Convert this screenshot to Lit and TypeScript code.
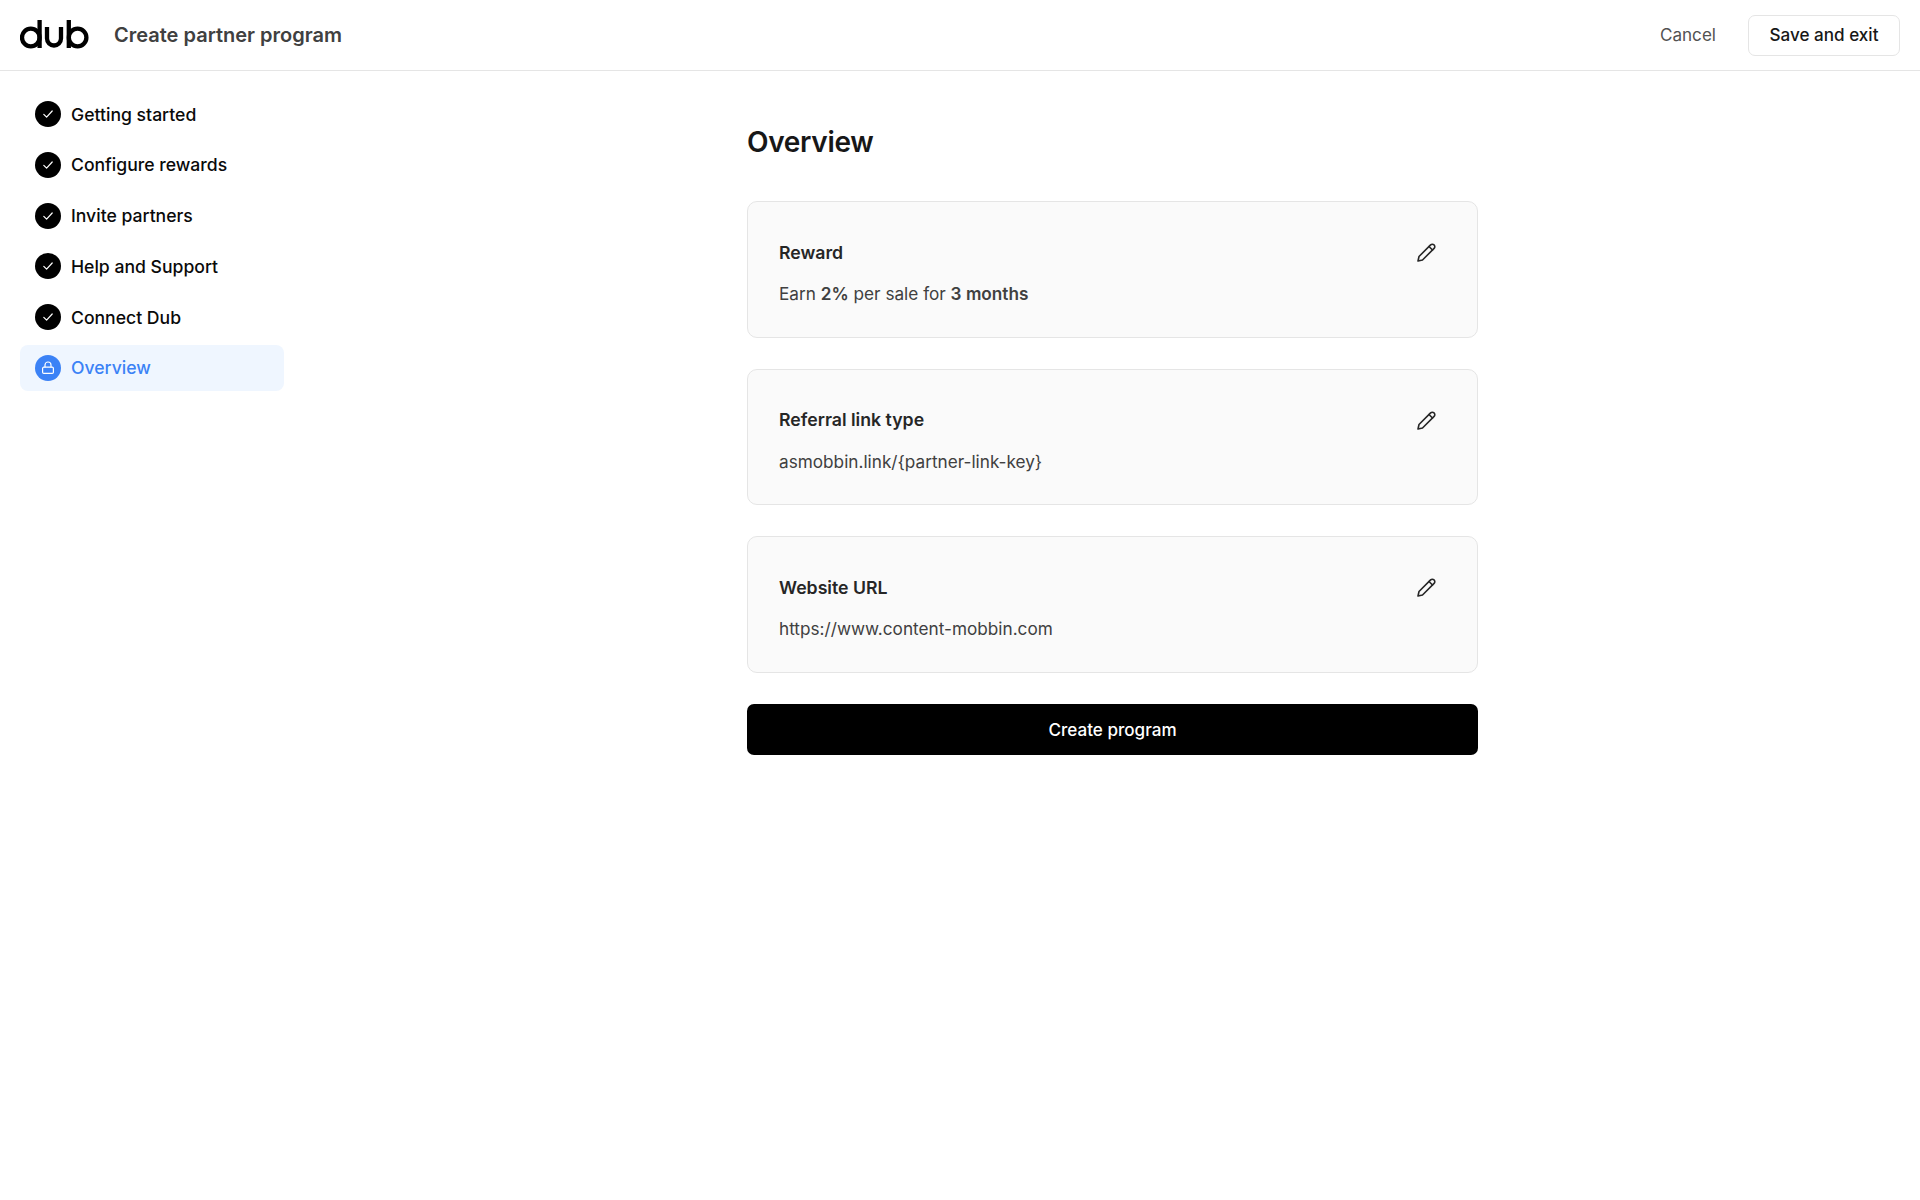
import { LitElement, html, css } from "lit";
import { customElement } from "lit/decorators.js";

const pencil = html`<svg class="pencil" viewBox="0 0 24 24" fill="none" stroke="currentColor" stroke-width="1.6" stroke-linecap="round" stroke-linejoin="round"><path d="M4 20l1-4.5L16.6 3.9a2.4 2.4 0 0 1 3.4 0l.1.1a2.4 2.4 0 0 1 0 3.4L8.5 19z"/><path d="M15 5.5l3.5 3.5"/></svg>`;

const check = html`<svg viewBox="0 0 16 16" fill="none" stroke="#fff" stroke-width="1.2" stroke-linecap="round" stroke-linejoin="round"><path d="M3.8 8.4l2.8 2.8 5.6-6.2"/></svg>`;
const lock = html`<svg viewBox="0 0 16 16" fill="none" stroke="#fff" stroke-width="1.2" stroke-linecap="round" stroke-linejoin="round"><rect x="2.6" y="7.2" width="10.8" height="6.2" rx="1.2"/><path d="M5 7V5a3 3 0 0 1 6 0v2"/></svg>`;

const steps = ["Getting started", "Configure rewards", "Invite partners", "Help and Support", "Connect Dub"];

@customElement("app-root")
export class AppRoot extends LitElement {
  static styles = css`
    :host { display: block; min-height: 1200px; background: #fff; font-family: Inter, "Liberation Sans", sans-serif; color: #171717; }
    * { box-sizing: border-box; }
    header { height: 71px; border-bottom: 1px solid #e5e5e5; display: flex; align-items: center; padding: 0 20px; }
    .logo { width: 69px; height: 30px; display: block; margin-top: -1px; }
    .title { margin-left: 25px; font-size: 20px; font-weight: 600; color: #404040; margin-top: -1px; }
    .spacer { flex: 1; }
    .cancel { font-size: 17.1px; color: #525252; margin-right: 32px; margin-top: -1px; }
    .save { width: 152px; height: 41px; border: 1px solid #e5e5e5; border-radius: 7px; display: flex; align-items: center; justify-content: center; font-size: 17.1px; font-weight: 500; color: #171717; padding-bottom: 1px; }
    .body { display: flex; }
    nav { width: 304px; padding: 20px 0 0 20px; display: flex; flex-direction: column; gap: 4.8px; }
    .step { width: 264px; height: 46px; border-radius: 8px; display: flex; align-items: center; gap: 10px; padding-left: 15px; font-size: 17.6px; font-weight: 500; color: #0a0a0a; }
    .dot { width: 26px; height: 26px; border-radius: 50%; background: #000; display: flex; align-items: center; justify-content: center; }
    .dot svg { width: 16px; height: 16px; }
    .step.active { background: #eff6ff; color: #3b82f6; }
    .step.active .dot { background: #3b82f6; }
    main { margin-left: 443px; width: 731px; padding-top: 51px; }
    h1 { margin: 0 0 39px; font-size: 28px; line-height: 40px; font-weight: 600; color: #171717; letter-spacing: -0.3px; }
    .card { height: 136.5px; background: #fafafa; border: 1px solid #e5e5e5; border-radius: 10px; padding: 35px 31px 0; margin-bottom: 31px; }
    .row { display: flex; align-items: center; justify-content: space-between; height: 30px; }
    .label { font-size: 17.7px; font-weight: 600; color: #262626; }
    .value { font-size: 17.2px; color: #404040; margin-top: 12px; line-height: 30px; }
    .value b { font-weight: 600; }
    .pencil { width: 24px; height: 24px; color: #262626; margin: 2px 8px 0 0; }
    .submit { height: 51px; background: #000; color: #fff; border-radius: 7px; display: flex; align-items: center; justify-content: center; font-size: 17.1px; font-weight: 500; }
  `;

  card(label: string, value: unknown) {
    return html`<section class="card"><div class="row"><span class="label">${label}</span>${pencil}</div><div class="value">${value}</div></section>`;
  }

  render() {
    return html`
      <header>
        <svg class="logo" viewBox="0 0 69 30" fill="none" stroke="#000" stroke-width="4.3">
          <circle cx="10.8" cy="17.5" r="8.8"/><path d="M19.6 0v28"/>
          <path d="M27 7v11.5a7 7 0 0 0 14 0V7"/>
          <circle cx="57.6" cy="17.5" r="8.8"/><path d="M48.8 0v28"/>
        </svg>
        <span class="title">Create partner program</span>
        <span class="spacer"></span>
        <span class="cancel">Cancel</span>
        <span class="save">Save and exit</span>
      </header>
      <div class="body">
        <nav>
          ${steps.map((s) => html`<div class="step"><span class="dot">${check}</span>${s}</div>`)}
          <div class="step active"><span class="dot">${lock}</span>Overview</div>
        </nav>
        <main>
          <h1>Overview</h1>
          ${this.card("Reward", html`Earn <b>2%</b> per sale for <b>3 months</b>`)}
          ${this.card("Referral link type", "asmobbin.link/{partner-link-key}")}
          ${this.card("Website URL", "https://www.content-mobbin.com")}
          <div class="submit">Create program</div>
        </main>
      </div>
    `;
  }
}
